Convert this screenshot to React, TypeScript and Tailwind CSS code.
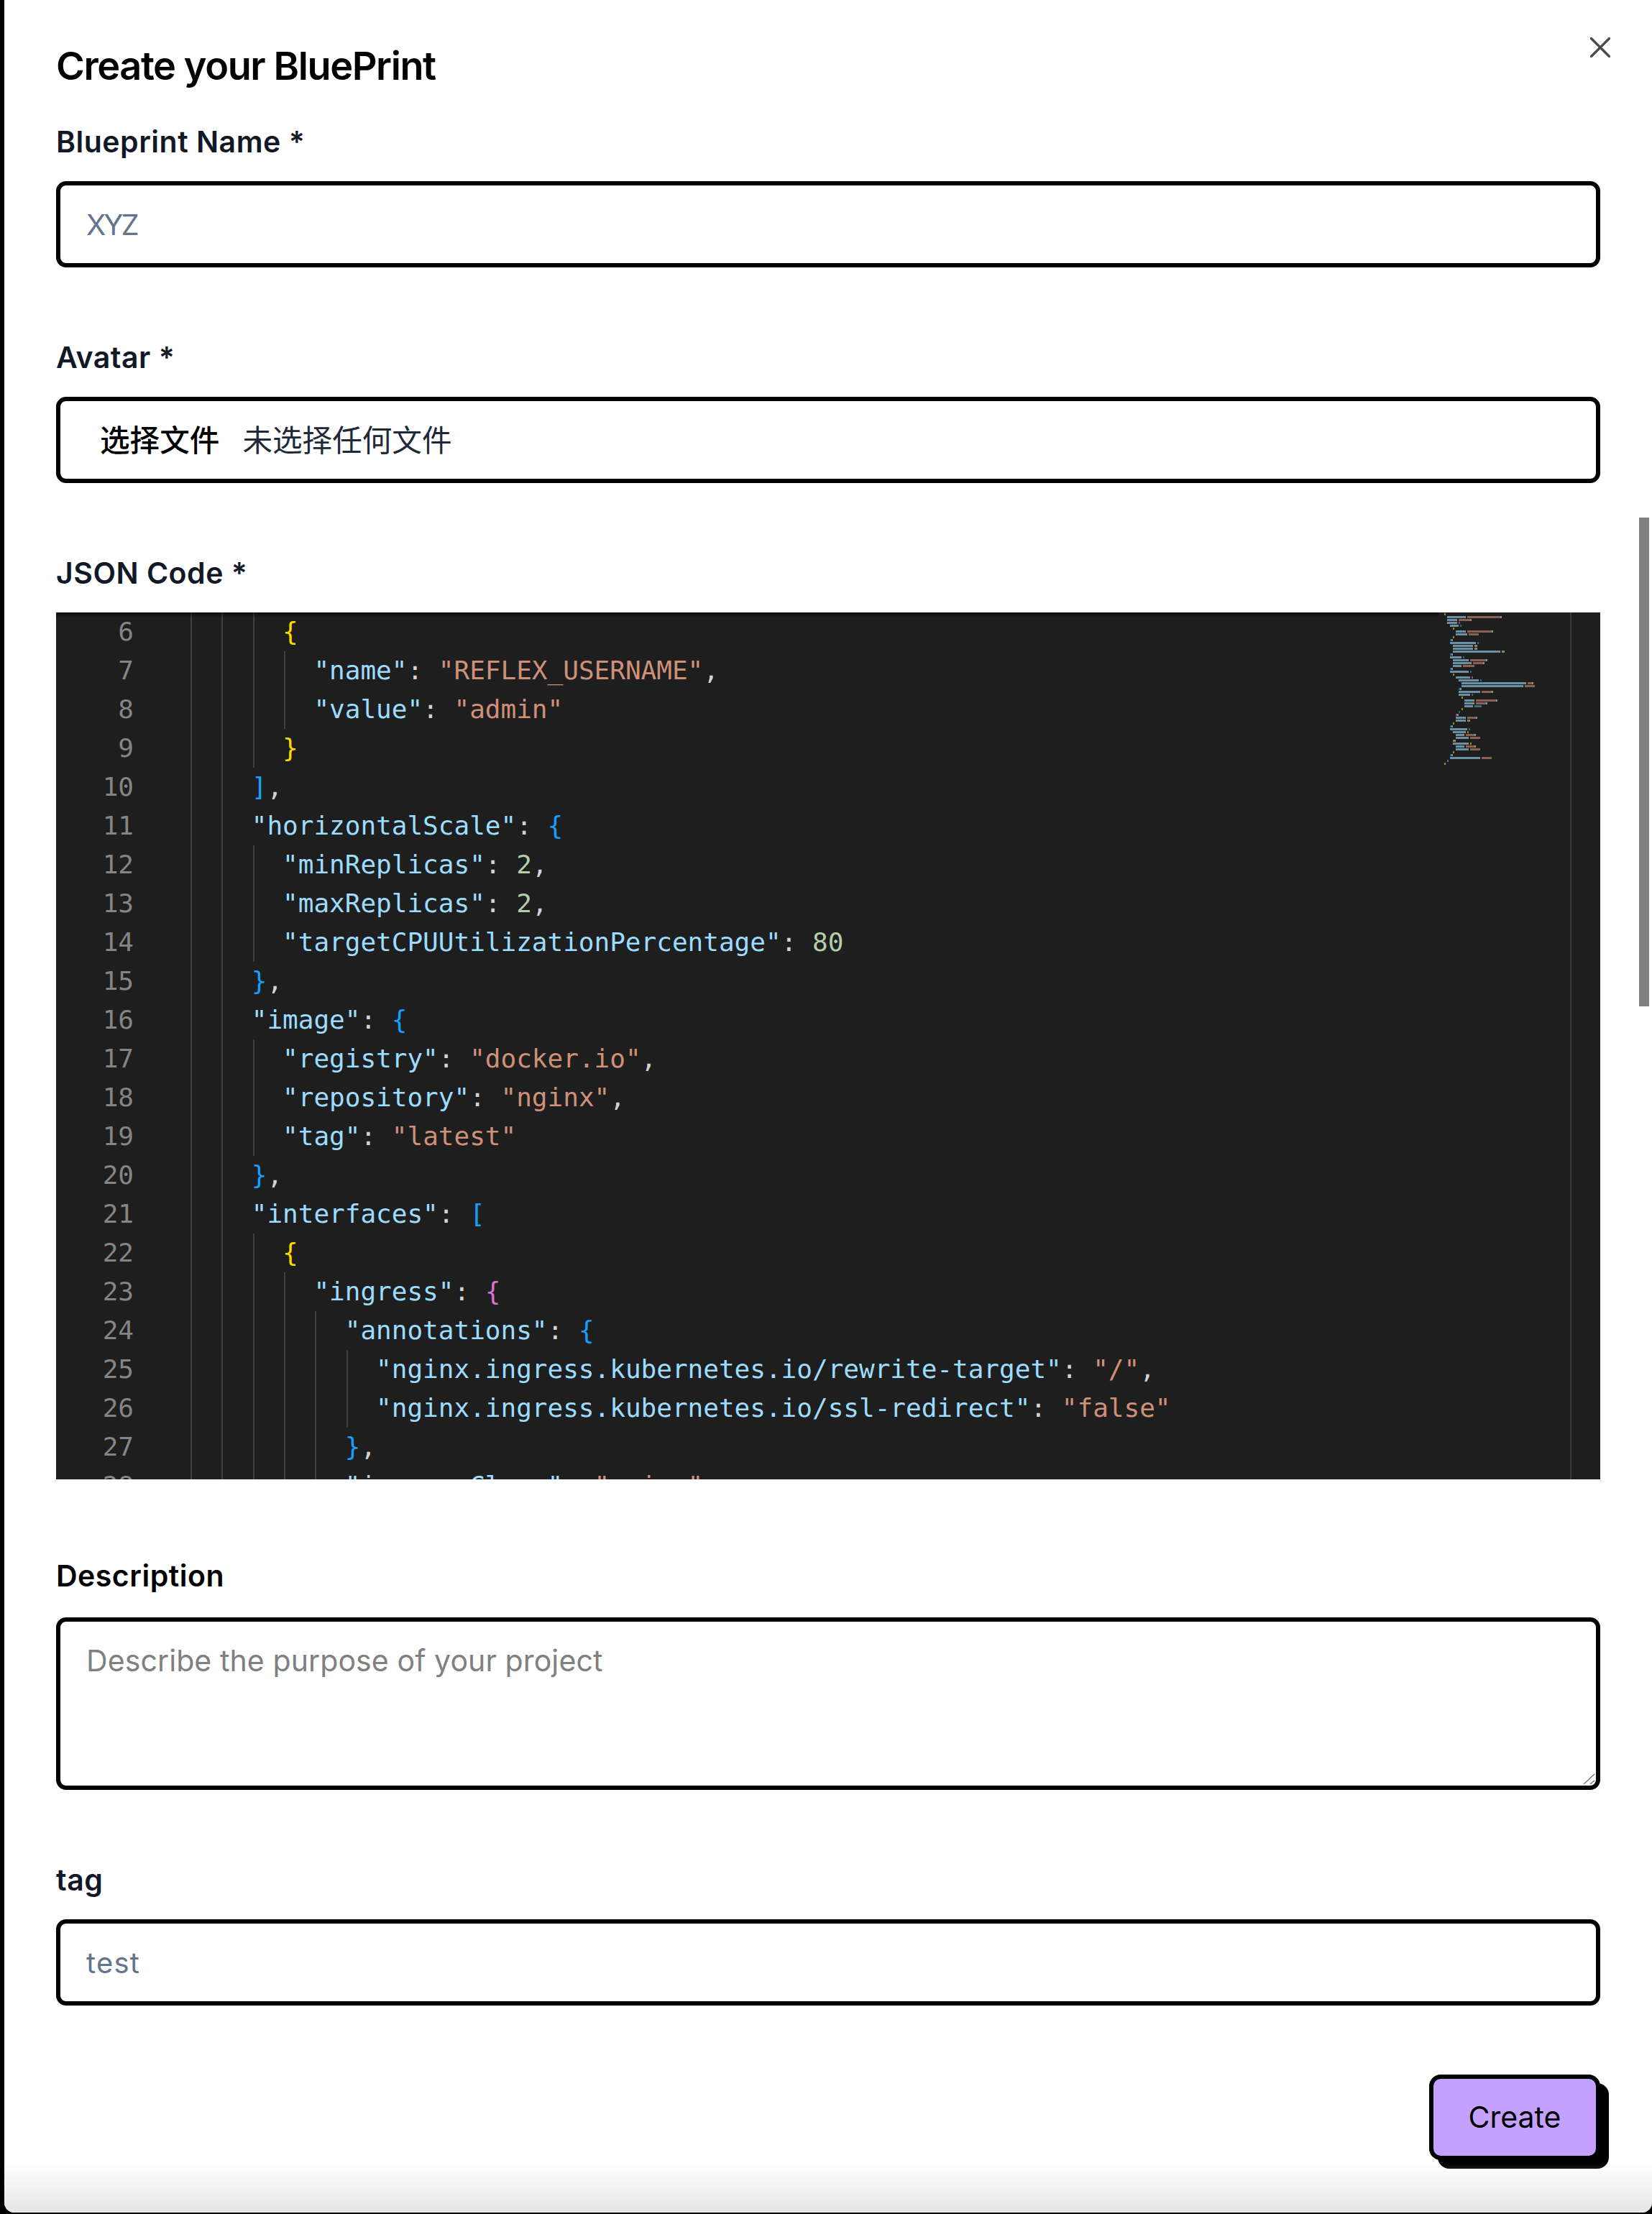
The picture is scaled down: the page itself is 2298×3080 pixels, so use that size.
import React from "react";

const SRC = `{
  "apiVersion": "nexthaus.com/v1alpha1",
  "kind": "Reflex",
  "spec": {
    "env": [
      {
        "name": "REFLEX_USERNAME",
        "value": "admin"
      }
    ],
    "horizontalScale": {
      "minReplicas": 2,
      "maxReplicas": 2,
      "targetCPUUtilizationPercentage": 80
    },
    "image": {
      "registry": "docker.io",
      "repository": "nginx",
      "tag": "latest"
    },
    "interfaces": [
      {
        "ingress": {
          "annotations": {
            "nginx.ingress.kubernetes.io/rewrite-target": "/",
            "nginx.ingress.kubernetes.io/ssl-redirect": "false"
          },
          "ingressClass": "nginx",
          "rules": [
            {
              "host": "nexthaus.com",
              "path": "/test",
              "tls": false
            }
          ]
        },
        "name": "http",
        "port": 80
      }
    ],
    "resources": {
      "limits": {
        "cpu": "200m",
        "memory": "256Mi"
      },
      "requests": {
        "cpu": "100m",
        "memory": "128Mi"
      }
    },
    "serviceAccountName": "nginx"
  }
}`;

type Tok = { t: string; c: string; col: number };
const BR = ["#ffd700", "#da70d6", "#179fff"];
const C = { key: "#9cdcfe", str: "#ce9178", num: "#b5cea8", kw: "#569cd6", p: "#d4d4d4" };

function tokenize(): Tok[][] {
  let depth = 0;
  return SRC.split("\n").map((line) => {
    const out: Tok[] = [];
    const re = /"[^"]*"(\s*:)?|[{}\[\]]|\d+|true|false|[:,]|\s+/g;
    let m: RegExpExecArray | null;
    while ((m = re.exec(line))) {
      const s = m[0];
      const col = m.index;
      if (s[0] === '"') {
        if (m[1]) {
          const q = s.slice(0, s.lastIndexOf('"') + 1);
          out.push({ t: q, c: C.key, col });
          out.push({ t: ":", c: C.p, col: col + q.length });
        } else out.push({ t: s, c: C.str, col });
      } else if (s === "{" || s === "[") {
        out.push({ t: s, c: BR[depth % 3], col });
        depth++;
      } else if (s === "}" || s === "]") {
        depth--;
        out.push({ t: s, c: BR[depth % 3], col });
      } else if (/^\d/.test(s)) out.push({ t: s, c: C.num, col });
      else if (s === "true" || s === "false") out.push({ t: s, c: C.kw, col });
      else out.push({ t: s, c: C.p, col });
    }
    return out;
  });
}
const LINES = tokenize();
const RAW = SRC.split("\n");

function Label({ children, black }: { children: React.ReactNode; black?: boolean }) {
  return (
    <label className={`block h-[60px] text-[41px] leading-[60px] font-semibold tracking-[0.5px] ${black ? "text-black" : "text-[#111827]"}`}>
      {children}
    </label>
  );
}

function Minimap() {
  return (
    <svg className="absolute left-[1923px] top-0 blur-[0.4px]" width="183" height="240">
      {LINES.map((toks, i) =>
        toks
          .filter((k) => k.t.trim())
          .map((k, j) => (
            <rect key={`${i}-${j}`} x={8 + k.col * 2} y={1 + i * 4} width={k.t.length * 2} height={3} fill={k.c} opacity={0.6} />
          ))
      )}
    </svg>
  );
}

function Editor() {
  const first = 5;
  const last = 28;
  const rows = [];
  for (let i = first; i < last; i++) {
    const indent = RAW[i].match(/^ */)![0].length;
    const guides: number[] = [];
    for (let g = 0; g < indent; g += 2) guides.push(g);
    rows.push(
      <div key={i} className="flex h-[54px] leading-[53px] shrink-0">
        <div className="w-[108px] shrink-0 text-right text-[#858585]">{i + 1}</div>
        <div className="relative ml-[77px] whitespace-pre">
          {guides.map((g) => (
            <span key={g} className="absolute top-0 h-[54px] w-[2px] bg-[#404040]" style={{ left: g * 21.67 + 2 }} />
          ))}
          {LINES[i].map((k, j) => (
            <span key={j} style={{ color: k.c }}>
              {k.t}
            </span>
          ))}
        </div>
      </div>
    );
  }
  return (
    <div className="relative mt-[25px] h-[1206px] overflow-hidden bg-[#1e1e1e] font-['DejaVu_Sans_Mono',monospace] text-[36px]">
      <div className="flex flex-col">{rows}</div>
      <div className="absolute left-0 top-0 h-[8px] w-[1923px] bg-gradient-to-b from-black/60 to-transparent" />
      <Minimap />
      <div className="absolute right-[40px] top-0 h-full w-[2px] bg-[#3a3a3a]" />
    </div>
  );
}

const inputCls =
  "block w-full h-[120px] mt-[25px] rounded-[14px] border-[6px] border-black bg-white px-[36px] text-[40px] text-[#111827] outline-none placeholder:text-[#64748b]";

export default function App() {
  return (
    <div className="w-[2298px] h-[3080px] bg-black overflow-hidden font-['Inter','Noto_Sans_CJK_SC',sans-serif]">
      <div className="relative h-[3078px] rounded-b-[14px] bg-white ml-[6px] pl-[72px] pr-[72px] pt-[56px] flex flex-col">
        <button className="absolute right-[58px] top-[52px] text-[#4b4b4b]">
          <svg width="28" height="28" viewBox="0 0 28 28" fill="none" stroke="currentColor" strokeWidth="3.4" strokeLinecap="round">
            <path d="M1.5 1.5 26.5 26.5M26.5 1.5 1.5 26.5" />
          </svg>
        </button>
        <div className="absolute right-[4px] top-[720px] h-[680px] w-[14px] bg-[#808080]" />

        <h2 className="h-[72px] text-[54px] leading-[72px] font-semibold tracking-[-1.4px] text-black">Create your BluePrint</h2>

        <div className="mt-[39px]">
          <Label>Blueprint Name *</Label>
          <input className={`${inputCls} tracking-[-3px]`} placeholder="XYZ" />
        </div>

        <div className="mt-[95px]">
          <Label>Avatar *</Label>
          <div className="mt-[25px] flex h-[120px] items-center rounded-[14px] border-[6px] border-black bg-white pl-[55px] pt-[2px] text-[41.6px] text-[#1f2937]">
            <span className="font-medium text-black">选择文件</span>
            <span className="ml-[32px]">未选择任何文件</span>
          </div>
        </div>

        <div className="mt-[95px]">
          <Label>JSON Code *</Label>
          <Editor />
        </div>

        <div className="mt-[104px]">
          <Label black>Description</Label>
          <div className="relative mt-[28px]">
            <textarea
              className="block h-[240px] w-full resize-none rounded-[14px] border-[6px] border-black bg-white px-[36px] pt-[24px] text-[41px] leading-[60px] tracking-[0.1px] outline-none placeholder:text-[#808080]"
              placeholder="Describe the purpose of your project"
            />
            <svg className="absolute bottom-[6px] right-[6px]" width="20" height="20" viewBox="0 0 20 20" fill="none" stroke="#777" strokeWidth="1.4">
              <path d="M3 18 18 4M12 18l6-5" />
            </svg>
          </div>
        </div>

        <div className="mt-[95px]">
          <Label>tag</Label>
          <input className={`${inputCls} tracking-[1.2px]`} placeholder="test" />
        </div>

        <div className="mt-[96px] flex justify-end">
          <button className="h-[119px] w-[238px] rounded-[16px] border-[6px] border-black bg-[#c4a1ff] text-[41px] text-black shadow-[12px_12px_0_0_#000]">
            Create
          </button>
        </div>

        <div className="pointer-events-none absolute bottom-0 left-0 right-0 h-[68px] rounded-b-[14px] bg-gradient-to-b from-transparent to-[#e6e6e6]" />
      </div>
    </div>
  );
}
